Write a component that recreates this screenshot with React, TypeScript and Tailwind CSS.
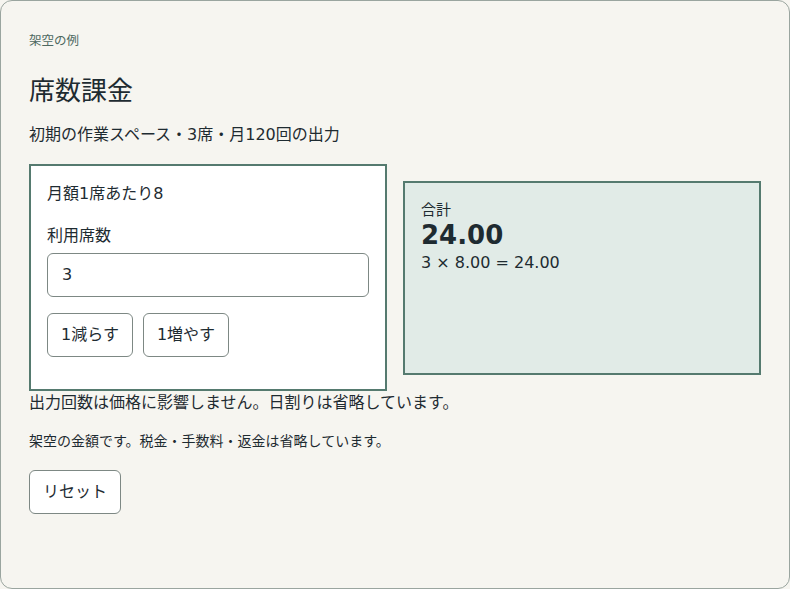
import React, { useState } from "react";

export default function App() {
  const [seats, setSeats] = useState(3);
  const price = 8;
  const total = (seats * price).toFixed(2);
  return (
    <div
      className="w-[790px] h-[589px] bg-[#f6f5f0] text-[#1e2b31]"
      style={{ fontFamily: '"DejaVu Sans", "Noto Sans CJK JP", sans-serif' }}
    >
      <div className="h-full rounded-[12px] border border-[#9aa59f] px-[28px] pt-[31px]">
        <p className="text-[12.5px] leading-[18px] text-[#4d6860]">架空の例</p>
        <h1 className="mt-[25px] text-[26px] leading-[32px] font-normal">席数課金</h1>
        <p className="mt-[16px] text-[16px] leading-[24px]">初期の作業スペース・3席・月120回の出力</p>
        <div className="mt-[17px] flex items-center gap-[16px]">
          <div className="flex-1 border-2 border-[#557a6f] bg-white px-[16px] pt-[16px] pb-[32px]">
            <p className="text-[16px] leading-[24px]">月額1席あたり8</p>
            <label className="mt-[18px] block text-[16px] leading-[24px]">利用席数</label>
            <div className="mt-[5px] flex h-[44px] items-center rounded-[6px] border border-[#7d8884] bg-white px-[14px] text-[16px]">
              {seats}
            </div>
            <div className="mt-[16px] flex gap-[10px]">
              <button
                onClick={() => setSeats(Math.max(0, seats - 1))}
                className="h-[44px] w-[86px] rounded-[6px] border border-[#7d8884] bg-white text-[16px] text-[#1e2b31]"
              >
                1減らす
              </button>
              <button
                onClick={() => setSeats(seats + 1)}
                className="h-[44px] w-[86px] rounded-[6px] border border-[#7d8884] bg-white text-[16px] text-[#1e2b31]"
              >
                1増やす
              </button>
            </div>
          </div>
          <div className="flex-1 h-[194px] border-2 border-[#557a6f] bg-[#e1ebe7] px-[16px] pt-[16px]">
            <p className="text-[15px] leading-[22px]">合計</p>
            <p className="text-[26px] leading-[28px] font-bold">{total}</p>
            <p className="mt-[2px] text-[16px] leading-[24px]">
              {seats} × {price.toFixed(2)} = {total}
            </p>
          </div>
        </div>
        <p className="text-[16px] leading-[24px]">出力回数は価格に影響しません。日割りは省略しています。</p>
        <p className="mt-[16px] text-[14px] leading-[20px]">架空の金額です。税金・手数料・返金は省略しています。</p>
        <button
          onClick={() => setSeats(3)}
          className="mt-[19px] h-[44px] w-[92px] rounded-[6px] border border-[#7d8884] bg-white text-[16px] text-[#1e2b31]"
        >
          リセット
        </button>
      </div>
    </div>
  );
}
